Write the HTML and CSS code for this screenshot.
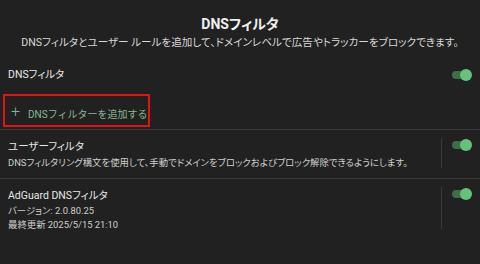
FILE: index.html
```html
<!DOCTYPE html>
<html>

<head>
	<meta charset="utf-8">
	<meta name="viewport" content="width=device-width, initial-scale=1">
	<title>DNSフィルタ</title>
	<link rel="stylesheet" href="styles.css">
</head>

<body>
	<div class="page">
		<div class="header">
			<h1 class="title">DNSフィルタ</h1>
			<p class="subtitle">DNSフィルタとユーザー ルールを追加して、ドメインレベルで広告やトラッカーをブロックできます。</p>
		</div>

		<div class="row main-row">
			<span class="row-title">DNSフィルタ</span>
			<span class="toggle on"></span>
		</div>

		<div class="add-wrap">
			<button class="add-btn"><span class="plus">+</span>DNSフィルターを追加する</button>
		</div>

		<div class="filter">
			<div class="filter-text">
				<div class="row-title">ユーザーフィルタ</div>
				<div class="row-sub desc">DNSフィルタリング構文を使用して、手動でドメインをブロックおよびブロック解除できるようにします。</div>
			</div>
			<div class="sep"></div>
			<span class="toggle on"></span>
		</div>

		<div class="filter">
			<div class="filter-text">
				<div class="row-title">AdGuard DNSフィルタ</div>
				<div class="row-sub">バージョン: 2.0.80.25</div>
				<div class="row-sub">最終更新 2025/5/15 21:10</div>
			</div>
			<div class="sep"></div>
			<span class="toggle on"></span>
		</div>
	</div>
</body>

</html>
```
FILE: styles.css
```css
body {
	margin: 0;
	background-color: #212121;
	color: #e6e6e6;
	font-family: Roboto, "Noto Sans CJK JP", sans-serif;
	font-feature-settings: "palt";
}

.page {
	width: 480px;
	height: 264px;
	overflow: hidden;
}

.header {
	text-align: center;
	padding-top: 15px;
}

.title {
	margin: 0;
	font-size: 14px;
	line-height: 18px;
	font-weight: bold;
	color: #f0f0f0;
}

.subtitle {
	margin: 3px 0 0;
	font-size: 10.6px;
	line-height: 14px;
	color: #d8d8d8;
}

.row {
	display: flex;
	align-items: center;
	justify-content: space-between;
	padding: 0 8px;
}

.main-row {
	height: 24px;
	margin-top: 13px;
}

.row-title {
	font-size: 10.5px;
	line-height: 16px;
	color: #e8e8e8;
}

.row-sub {
	font-size: 9.4px;
	line-height: 14px;
	color: #cfcfcf;
}

.row-sub.desc {
	line-height: 16px;
}

.toggle {
	position: relative;
	flex: none;
	width: 18px;
	height: 8px;
	border-radius: 4px;
	background-color: #3e6e48;
	margin-right: 2px;
}

.toggle.on::after {
	content: "";
	position: absolute;
	right: -2px;
	top: -2px;
	width: 12px;
	height: 12px;
	border-radius: 50%;
	background-color: #66c27b;
}

.add-wrap {
	padding: 7px 0 2px 3px;
	border-bottom: 1px solid #3b3b3b;
}

.add-btn {
	display: flex;
	align-items: center;
	width: 147px;
	height: 33px;
	padding: 6px 0 0 6px;
	background: none;
	border: 2px solid #e01414;
	color: #86b98d;
	font-family: inherit;
	font-size: 10px;
	white-space: nowrap;
}

.plus {
	font-size: 16px;
	font-weight: 300;
	margin-right: 8px;
	margin-top: -5px;
}

.filter {
	display: flex;
	align-items: flex-start;
	padding: 8px 8px 7px;
	border-bottom: 1px solid #3b3b3b;
}

.filter:last-child {
	border-bottom: none;
}

.filter-text {
	flex: 1;
	padding-top: 1px;
}

.sep {
	width: 1px;
	align-self: stretch;
	background-color: #3b3b3b;
	margin: 0 10px 3px 0;
}

.filter .toggle {
	margin-top: 3px;
}
```
